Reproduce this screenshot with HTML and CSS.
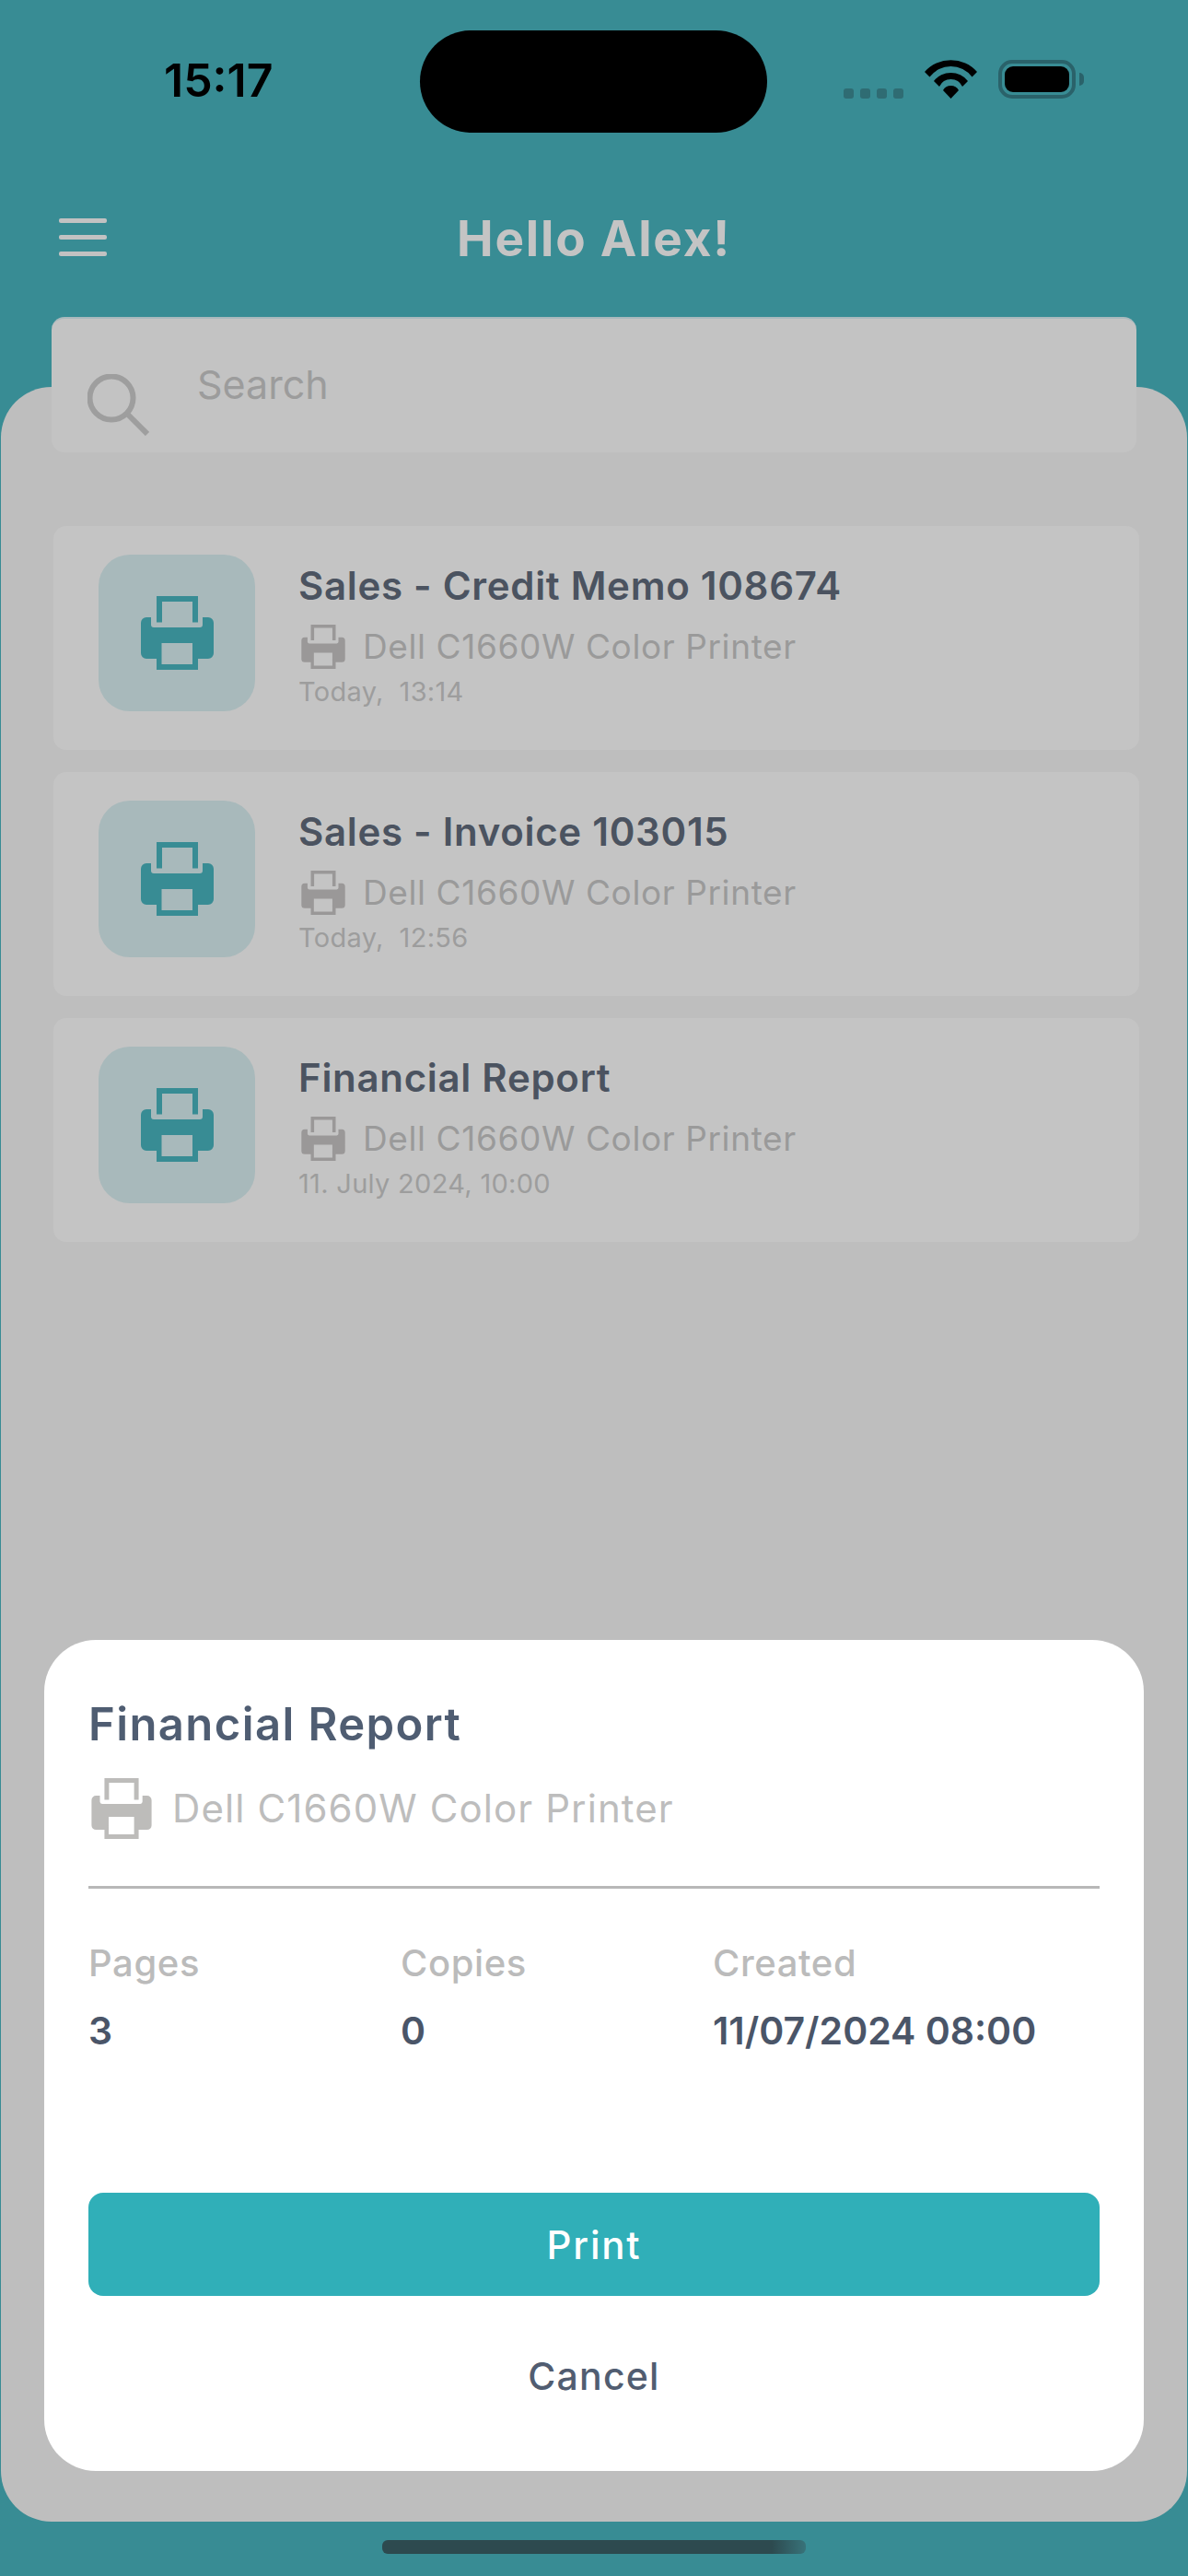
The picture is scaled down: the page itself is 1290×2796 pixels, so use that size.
FILE: index.html
```html
<!DOCTYPE html>
<html lang="en">
<head>
<meta charset="utf-8">
<title>Hello Alex!</title>
<link rel="stylesheet" href="styles.css">
</head>
<body>
<svg class="defs" width="0" height="0" aria-hidden="true">
  <symbol id="printer" viewBox="0 0 79 80">
    <path fill-rule="evenodd" d="M17 0H62V28.500H56V6H23V28.500H17Z"/>
    <path fill-rule="evenodd" d="M0 29a6 6 0 0 1 6-6H11V31a3 3 0 0 0 3 3H64a3 3 0 0 0 3-3V23H73a6 6 0 0 1 6 6V62a6 6 0 0 1-6 6H62V80H17V68H6a6 6 0 0 1-6-6ZM22.500 51V74H56V51Z"/>
  </symbol>
</svg>
<div class="screen">
  <div class="status">
    <span class="time">15:17</span>
    <div class="island"></div>
    <div class="status-icons">
      <div class="signal"><i></i><i></i><i></i><i></i></div>
      <svg class="wifi" viewBox="0 0 57 42">
        <path d="M0 13A38 38 0 0 1 57 13L51.500 18.500A28.750 28.750 0 0 0 5.500 18.500Z"/>
        <path d="M10 23A23.500 23.500 0 0 1 47 23L41 29A13.800 13.800 0 0 0 16 29Z"/>
        <path d="M20 33A9.700 9.700 0 0 1 37 33L28.500 42Z"/>
      </svg>
      <div class="battery"><div class="battery-fill"></div></div>
      <div class="battery-nub"></div>
    </div>
  </div>

  <header class="topbar">
    <div class="menu"><i></i><i></i><i></i></div>
    <h1 class="greeting">Hello Alex!</h1>
  </header>

  <div class="search">
    <svg class="search-icon" viewBox="0 0 67 67">
      <circle cx="26" cy="26" r="23.500" />
      <path d="M43 43L65 65"/>
    </svg>
    <span class="search-text">Search</span>
  </div>

  <main class="panel">
    <ul class="jobs">
      <li class="job">
        <div class="tile"><svg class="tile-printer"><use href="#printer"/></svg></div>
        <div class="job-text">
          <div class="job-title">Sales - Credit Memo 108674</div>
          <div class="job-printer"><svg class="small-printer"><use href="#printer"/></svg><span>Dell C1660W Color Printer</span></div>
          <div class="job-date">Today,&nbsp; 13:14</div>
        </div>
      </li>
      <li class="job">
        <div class="tile"><svg class="tile-printer"><use href="#printer"/></svg></div>
        <div class="job-text">
          <div class="job-title">Sales - Invoice 103015</div>
          <div class="job-printer"><svg class="small-printer"><use href="#printer"/></svg><span>Dell C1660W Color Printer</span></div>
          <div class="job-date">Today,&nbsp; 12:56</div>
        </div>
      </li>
      <li class="job">
        <div class="tile"><svg class="tile-printer"><use href="#printer"/></svg></div>
        <div class="job-text">
          <div class="job-title">Financial Report</div>
          <div class="job-printer"><svg class="small-printer"><use href="#printer"/></svg><span>Dell C1660W Color Printer</span></div>
          <div class="job-date">11. July 2024, 10:00</div>
        </div>
      </li>
    </ul>

    <section class="sheet">
      <h2 class="sheet-title">Financial Report</h2>
      <div class="sheet-printer"><svg class="sheet-printer-icon"><use href="#printer"/></svg><span>Dell C1660W Color Printer</span></div>
      <div class="divider"></div>
      <div class="facts">
        <div class="fact"><div class="fact-label">Pages</div><div class="fact-value">3</div></div>
        <div class="fact"><div class="fact-label">Copies</div><div class="fact-value">0</div></div>
        <div class="fact"><div class="fact-label">Created</div><div class="fact-value">11/07/2024 08:00</div></div>
      </div>
      <button class="print">Print</button>
      <button class="cancel">Cancel</button>
    </section>
  </main>

  <div class="home"></div>
</div>
</body>
</html>
```
FILE: styles.css
```css
* { box-sizing: border-box; }
html, body { margin: 0; padding: 0; }
body { width: 1290px; height: 2796px; background: #388c94; font-family: Inter, "Open Sans", sans-serif; overflow: hidden; }
.defs { position: absolute; }
.screen { width: 1290px; height: 2796px; display: flex; flex-direction: column; position: relative; }
.status { height: 144px; padding-top: 33px; display: flex; position: relative; }
.time { position: absolute; left: 178px; top: 58px; font-size: 50px; line-height: 58px; font-weight: 600; color: #000; }
.island { width: 377px; height: 111px; margin-left: 456px; border-radius: 56px; background: #000; }
.status-icons { display: flex; align-items: flex-start; margin-left: 83px; padding-top: 32px; }
.signal { display: flex; gap: 7px; padding-top: 31px; }
.signal i { display: block; width: 11px; height: 11px; border-radius: 3px; background: #2f6c73; }
.wifi { width: 57px; height: 42px; margin-left: 23px; fill: #000; }
.battery { width: 84px; height: 42px; margin-left: 23px; border: 4px solid #2a626a; border-radius: 15px; padding: 3px; }
.battery-fill { width: 100%; height: 100%; background: #000; border-radius: 9px; }
.battery-nub { width: 5px; height: 14px; margin: 14px 0 0 4px; border-radius: 0 5px 5px 0; background: #2a626a; }
.topbar { height: 200px; padding-top: 93px; position: relative; }
.menu { position: absolute; left: 64px; top: 93px; width: 52px; display: flex; flex-direction: column; gap: 13px; }
.menu i { display: block; height: 5px; border-radius: 2px; background: #c2c2c2; }
.greeting { margin: -3px 0 0; text-align: center; font-size: 53px; line-height: 50px; font-weight: 700; letter-spacing: 1.8px; color: #c4c4c4; }
.search { height: 147px; margin: 0 56px -71px; position: relative; z-index: 1; background: #c3c3c3; border-top: 2px solid #a9b9bd; border-radius: 14px; display: flex; align-items: center; }
.search-icon { width: 67px; height: 67px; margin: 42px 0 0 39px; fill: none; stroke: #9e9e9e; stroke-width: 6; }
.search-text { margin: -3px 0 0 52px; font-size: 43px; color: #9c9c9c; }
.panel { height: 2317px; margin: 0 1px; background: #bebebe; border-radius: 55px; position: relative; padding: 151px 0 0 57px; }
.jobs { list-style: none; margin: 0; padding: 0; display: flex; flex-direction: column; gap: 24px; width: 1179px; }
.job { height: 243px; background: #c4c4c4; border-radius: 14px; display: flex; padding: 31px 0 0 49px; }
.tile { width: 170px; height: 170px; border-radius: 34px; background: #a8b9bb; display: flex; align-items: center; justify-content: center; }
.tile-printer { width: 79px; height: 80px; fill: #388c94; }
.job-text { margin-left: 47px; }
.job-title { font-size: 42px; line-height: 46px; font-weight: 600; letter-spacing: 0.7px; color: #4b5360; margin-top: 11px; }
.job-printer { display: flex; align-items: center; margin-top: 18px; font-size: 37px; line-height: 50px; letter-spacing: 0.6px; color: #9a9a9a; }
.small-printer { width: 48px; height: 48px; margin: 0 19px 0 3px; fill: #9a9898; }
.job-date { font-size: 29px; line-height: 34px; letter-spacing: 0.3px; margin-top: 7px; color: #9d9d9d; }
.sheet { position: absolute; left: 47px; top: 1360px; width: 1194px; height: 902px; background: #fff; border-radius: 56px; padding: 0 48px; display: flex; flex-direction: column; }
.sheet-title { margin: 64px 0 0; font-size: 49px; line-height: 56px; font-weight: 600; letter-spacing: 1.4px; color: #4f5d72; }
.sheet-printer { display: flex; align-items: center; margin-top: 30px; font-size: 42px; line-height: 66px; letter-spacing: 1.1px; color: #bdbdbd; }
.sheet-printer-icon { width: 66px; height: 66px; margin: 0 22px 0 3px; fill: #bdbcba; }
.divider { height: 3px; margin-top: 51px; background: #b8b8b8; }
.facts { display: grid; grid-template-columns: 339px 339px 1fr; margin-top: 58px; }
.fact-label { font-size: 40px; line-height: 46px; letter-spacing: 0.6px; color: #bbb; font-weight: 500; }
.fact-value { margin-top: 27px; font-size: 41px; line-height: 46px; font-weight: 600; color: #4a5568; }
.print { height: 112px; margin-top: 153px; border: 0; border-radius: 16px; background: #30afb8; color: #fff; font: 500 42px Inter, sans-serif; letter-spacing: 1.8px; }
.cancel { height: 64px; margin-top: 55px; border: 0; background: none; color: #515d71; font: 500 41px Inter, sans-serif; letter-spacing: 1.2px; }
.home { width: 460px; height: 15px; margin: 20px 0 0 415px; border-radius: 6px; background: linear-gradient(90deg, #2d4a4f 92%, #38737a); }
```
